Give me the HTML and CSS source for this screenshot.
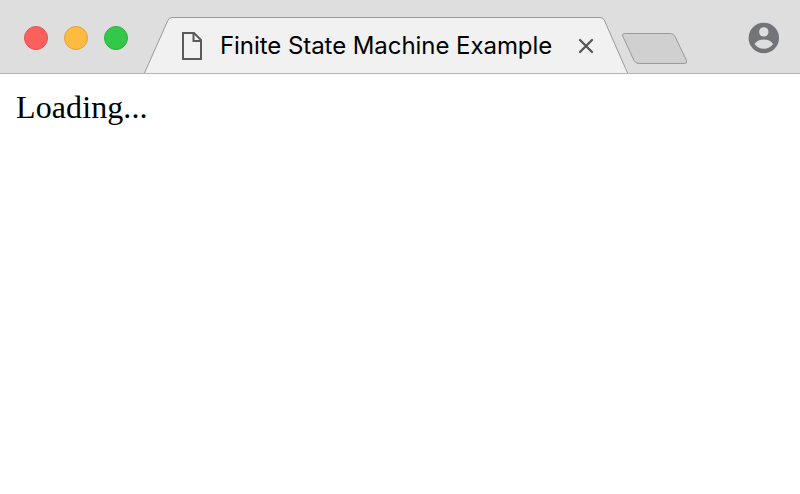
FILE: index.html
```html
<!DOCTYPE html>
<html lang="en">
<head>
<meta charset="utf-8">
<title>Finite State Machine Example</title>
<link rel="stylesheet" href="styles.css">
</head>
<body>
<header class="tabbar">
  <div class="lights">
    <span class="light close"></span>
    <span class="light minimize"></span>
    <span class="light maximize"></span>
  </div>
  <div class="tab">
    <svg class="tab-shape" width="486" height="56" viewBox="0 0 486 56">
      <path d="M1 57 25 3.2Q26.2.5 29 .5H457Q460 .5 461.3 3.2L485 57" fill="#f1f1f1" stroke="#999"/>
    </svg>
    <svg class="page-icon" width="20" height="28" viewBox="0 0 20 28" fill="none" stroke="#5a5a5a" stroke-width="2">
      <path d="M1 1H12L19 8V27H1Z"/>
      <path d="M11.5 1V9H19"/>
    </svg>
    <span class="title">Finite State Machine Example</span>
    <svg class="tab-close" width="16" height="16" viewBox="0 0 16 16" fill="none" stroke="#555" stroke-width="2.3" stroke-linecap="round">
      <path d="M2 2 14 14M14 2 2 14"/>
    </svg>
  </div>
  <svg class="new-tab" width="68" height="33" viewBox="0 0 68 33">
    <path d="M3.500 1.500H49.500Q52.500 1.500 54 4.500L65.500 28.500Q66.500 31.500 63.500 31.500H18Q14.500 31.500 13 28.500L1.700 4Q1 1.500 3.500 1.500Z" fill="#d0d0d0" stroke="#999"/>
  </svg>
  <svg class="profile" width="31" height="32" viewBox="0 0 31 32">
    <g transform="translate(.5 .5)">
      <circle cx="15.300" cy="15.500" r="15.200" fill="#727478"/>
      <circle cx="15.300" cy="9.400" r="4.700" fill="#dedede"/>
      <path d="M6 21.400C7.800 18.300 11.800 17 15.300 17S22.800 18.300 24.600 21.400C22.500 24.600 19.100 26.200 15.300 26.200S8.100 24.600 6 21.400Z" fill="#dedede"/>
    </g>
  </svg>
</header>
<main class="content">Loading...</main>
</body>
</html>
```
FILE: styles.css
```css
* { box-sizing: border-box; }
body {
  margin: 0;
  height: 494px;
  background: #fff;
  color: #000;
  overflow: hidden;
}
.tabbar {
  display: flex;
  align-items: flex-start;
  height: 74px;
  background: #dedede;
  border-bottom: 1px solid #b3b3b3;
}
.lights {
  display: flex;
  gap: 16px;
  padding: 26px 0 0 24px;
  width: 143px;
}
.light {
  width: 24px;
  height: 24px;
  border-radius: 50%;
  border: 1px solid;
}
.close { background: #fc605c; border-color: #e5514e; }
.minimize { background: #fdbc40; border-color: #e2a138; }
.maximize { background: #34c84a; border-color: #2cae3b; }
.tab {
  position: relative;
  display: flex;
  align-items: center;
  width: 486px;
  height: 56px;
  margin-top: 17px;
  padding: 2px 0 0 39px;
}
.tab-shape {
  position: absolute;
  left: 0;
  top: 0;
}
.page-icon, .title, .tab-close { position: relative; flex: none; }
.title {
  width: 340px;
  margin-left: 18px;
  font: 24px/30px Inter, sans-serif;
  letter-spacing: -0.06px;
  white-space: nowrap;
}
.tab-close { margin-left: 18px; }
.new-tab { margin: 32px 0 0 -8px; }
.profile { margin: 22px 21px 0 auto; }
.content {
  padding: 15px 16px;
  font: 32px/37px "Liberation Serif", serif;
  letter-spacing: 0.1px;
}
```
